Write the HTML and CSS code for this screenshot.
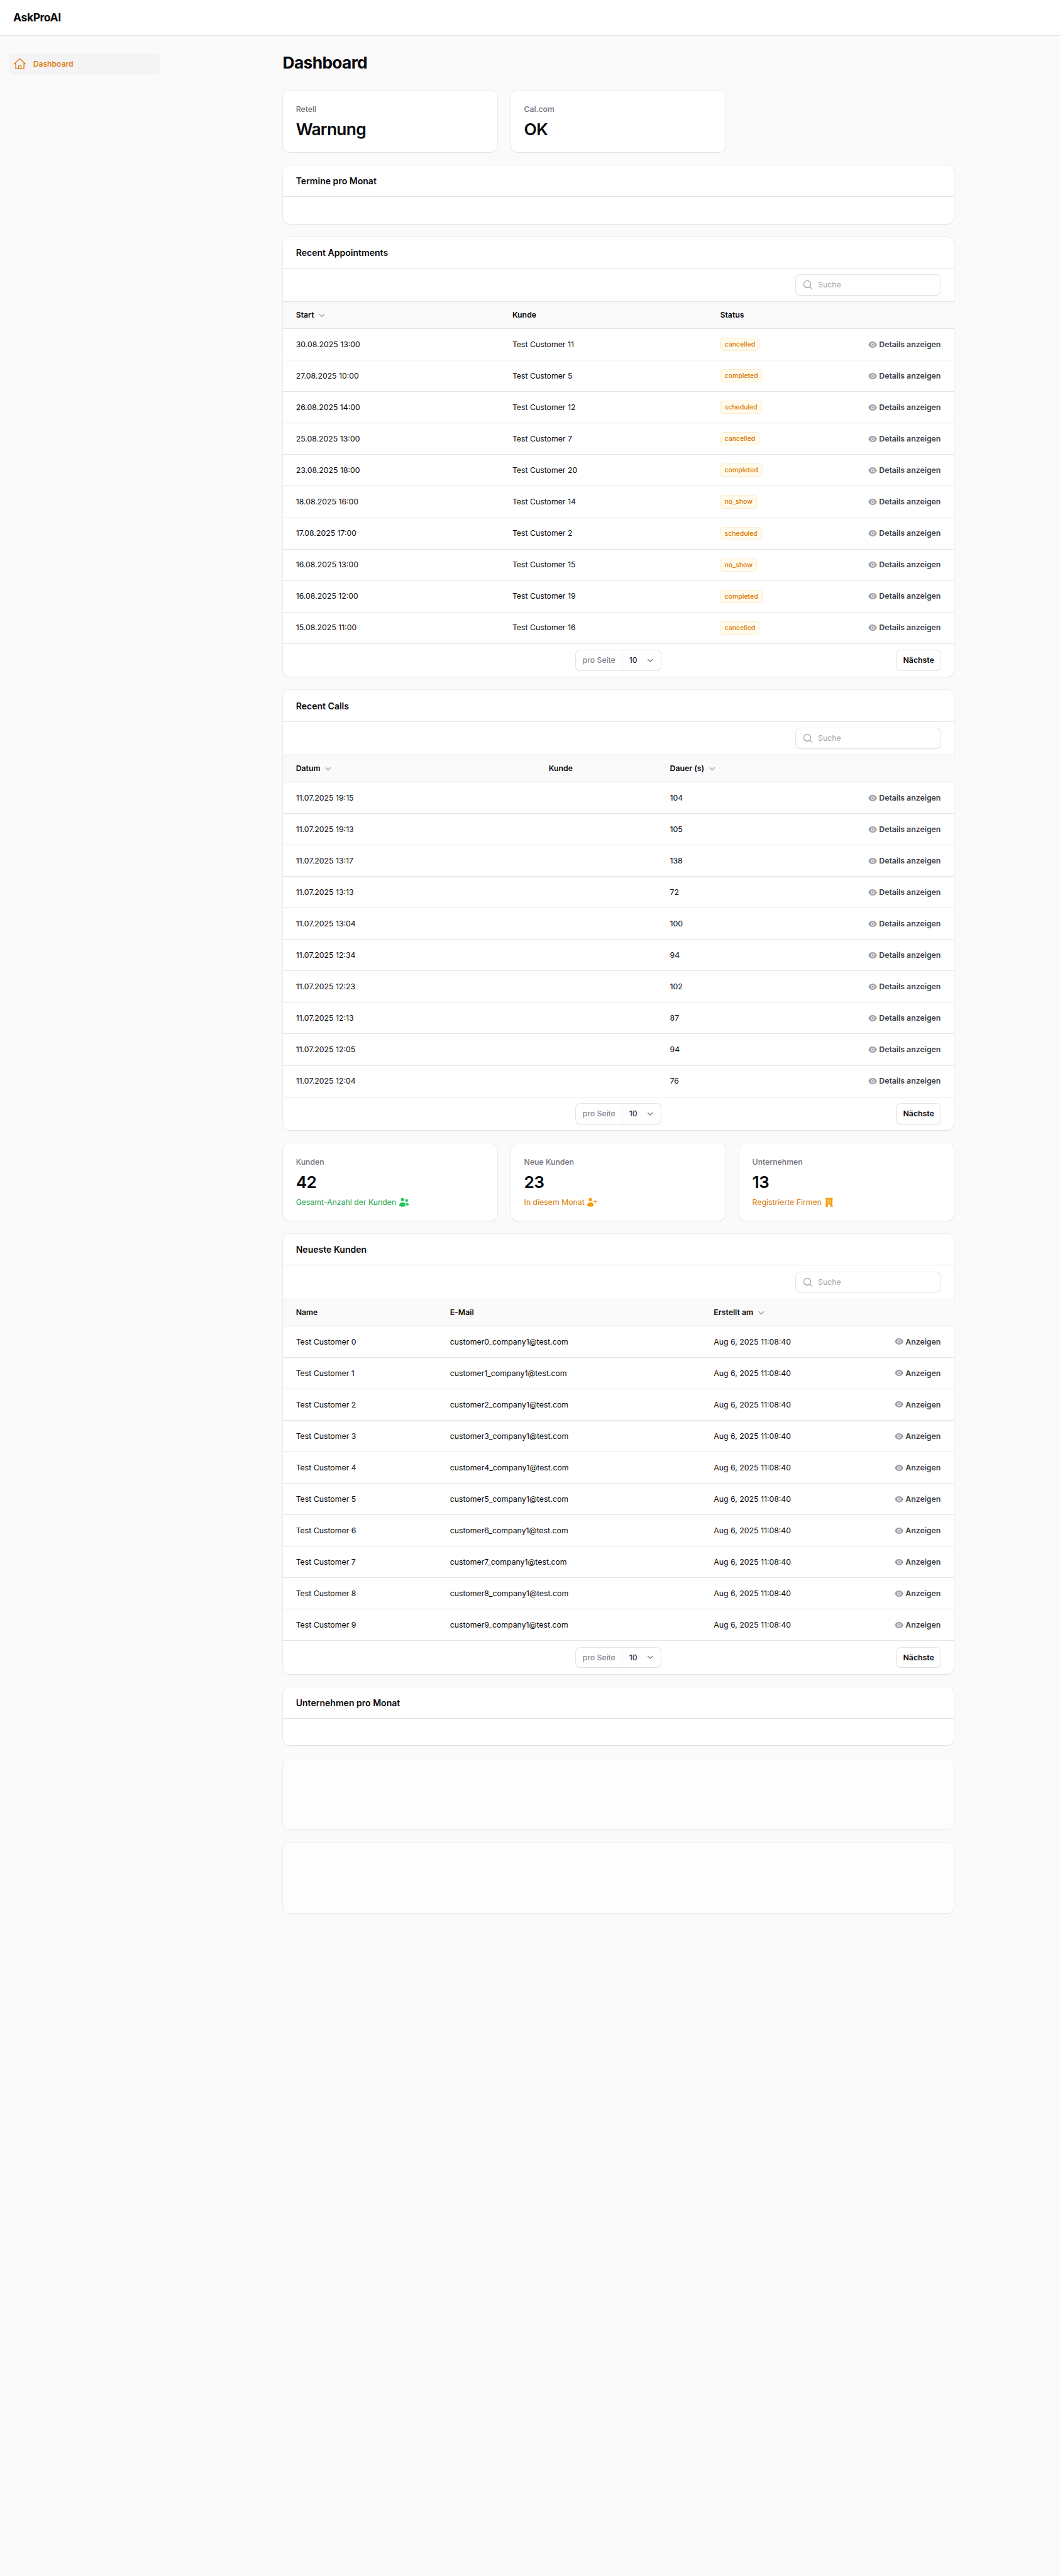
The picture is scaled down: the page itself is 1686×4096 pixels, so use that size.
FILE: index.html
```html
<!DOCTYPE html>
<html lang="de">
<head>
<meta charset="utf-8">
<title>Dashboard - AskProAI</title>
<link rel="stylesheet" href="styles.css">
</head>
<body>
<svg class="sprite" aria-hidden="true">
  <symbol id="home" viewBox="0 0 24 24"><path fill="none" stroke="currentColor" stroke-width="1.5" stroke-linecap="round" stroke-linejoin="round" d="m2.25 12 8.954-8.955c.44-.439 1.152-.439 1.591 0L21.75 12M4.5 9.75v10.125c0 .621.504 1.125 1.125 1.125H9.75v-4.875c0-.621.504-1.125 1.125-1.125h2.25c.621 0 1.125.504 1.125 1.125V21h4.125c.621 0 1.125-.504 1.125-1.125V9.75M8.25 21h8.25"/></symbol>
  <symbol id="search" viewBox="0 0 20 20"><path fill="currentColor" fill-rule="evenodd" d="M9 3.5a5.5 5.5 0 1 0 0 11 5.5 5.5 0 0 0 0-11ZM2 9a7 7 0 1 1 12.452 4.391l3.328 3.329a.75.75 0 1 1-1.06 1.06l-3.329-3.328A7 7 0 0 1 2 9Z"/></symbol>
  <symbol id="chevron" viewBox="0 0 20 20"><path fill="currentColor" fill-rule="evenodd" d="M5.22 8.22a.75.75 0 0 1 1.06 0L10 11.94l3.72-3.72a.75.75 0 1 1 1.06 1.06l-4.25 4.25a.75.75 0 0 1-1.06 0L5.22 9.28a.75.75 0 0 1 0-1.06Z"/></symbol>
  <symbol id="select" viewBox="0 0 20 20"><path fill="none" stroke="currentColor" stroke-width="1.5" stroke-linecap="round" stroke-linejoin="round" d="m6 8 4 4 4-4"/></symbol>
  <symbol id="eye" viewBox="0 0 20 20"><path fill="currentColor" d="M10 12.5a2.5 2.5 0 1 0 0-5 2.5 2.5 0 0 0 0 5Z"/><path fill="currentColor" fill-rule="evenodd" d="M.664 10.59a1.651 1.651 0 0 1 0-1.186A10.004 10.004 0 0 1 10 3c4.257 0 7.893 2.66 9.336 6.41.147.381.146.804 0 1.186A10.004 10.004 0 0 1 10 17c-4.257 0-7.893-2.66-9.336-6.41ZM14 10a4 4 0 1 1-8 0 4 4 0 0 1 8 0Z"/></symbol>
  <symbol id="users" viewBox="0 0 20 20"><path fill="currentColor" d="M7 8a3 3 0 1 0 0-6 3 3 0 0 0 0 6ZM14.5 9a2.5 2.5 0 1 0 0-5 2.5 2.5 0 0 0 0 5ZM1.615 16.428a1.224 1.224 0 0 1-.569-1.175 6.002 6.002 0 0 1 11.908 0c.058.467-.172.92-.57 1.174A9.953 9.953 0 0 1 7 18a9.953 9.953 0 0 1-5.385-1.572ZM14.5 16h-.106c.07-.297.088-.611.048-.933a7.47 7.47 0 0 0-1.588-3.755 4.502 4.502 0 0 1 5.874 2.636.818.818 0 0 1-.36.98A7.465 7.465 0 0 1 14.5 16Z"/></symbol>
  <symbol id="user-plus" viewBox="0 0 20 20"><path fill="currentColor" d="M10 5a3 3 0 1 1-6 0 3 3 0 0 1 6 0ZM1.615 16.428a1.224 1.224 0 0 1-.569-1.175 6.002 6.002 0 0 1 11.908 0c.058.467-.172.92-.57 1.174A9.953 9.953 0 0 1 7 18a9.953 9.953 0 0 1-5.385-1.572ZM16.25 5.75a.75.75 0 0 0-1.5 0v2h-2a.75.75 0 0 0 0 1.5h2v2a.75.75 0 0 0 1.5 0v-2h2a.75.75 0 0 0 0-1.5h-2v-2Z"/></symbol>
  <symbol id="office" viewBox="0 0 20 20"><path fill="currentColor" fill-rule="evenodd" d="M4 16.5v-13h-.25a.75.75 0 0 1 0-1.5h12.5a.75.75 0 0 1 0 1.5H16v13h.25a.75.75 0 0 1 0 1.5h-3.5a.75.75 0 0 1-.75-.75v-2.5a.75.75 0 0 0-.75-.75h-2.5a.75.75 0 0 0-.75.75v2.5a.75.75 0 0 1-.75.75h-3.5a.75.75 0 0 1 0-1.5H4Zm3-11a.5.5 0 0 1 .5-.5h1a.5.5 0 0 1 .5.5v1a.5.5 0 0 1-.5.5h-1a.5.5 0 0 1-.5-.5v-1ZM7.500 9a.5.5 0 0 0-.5.5v1a.5.5 0 0 0 .5.5h1a.5.5 0 0 0 .5-.5v-1a.5.5 0 0 0-.5-.5h-1ZM11 5.500a.5.5 0 0 1 .5-.5h1a.5.5 0 0 1 .5.5v1a.5.5 0 0 1-.5.5h-1a.5.5 0 0 1-.5-.5v-1Zm.5 3.500a.5.5 0 0 0-.5.5v1a.5.5 0 0 0 .5.5h1a.5.5 0 0 0 .5-.5v-1a.5.5 0 0 0-.5-.5h-1Z"/></symbol>
</svg>
<header class="topbar">AskProAI</header>
<div class="layout">
  <nav class="sidebar"><a class="nav-item"><svg class="icon-lg"><use href="#home"/></svg>Dashboard</a></nav>
  <main class="main">
    <h1 class="title">Dashboard</h1>
    <div class="widgets">
      <div class="stats">
        <div class="card stat"><span class="stat-label">Retell</span><span class="stat-value">Warnung</span></div>
        <div class="card stat"><span class="stat-label">Cal.com</span><span class="stat-value">OK</span></div>
      </div>
      <section class="card"><h2 class="card-head">Termine pro Monat</h2><div class="chart"></div></section>
      <section class="card" data-table="appointments"></section>
      <section class="card" data-table="calls"></section>
      <div class="stats">
        <div class="card stat"><span class="stat-label">Kunden</span><span class="stat-value">42</span><span class="stat-desc success">Gesamt-Anzahl der Kunden<svg class="icon"><use href="#users"/></svg></span></div>
        <div class="card stat"><span class="stat-label">Neue Kunden</span><span class="stat-value">23</span><span class="stat-desc warning">In diesem Monat<svg class="icon"><use href="#user-plus"/></svg></span></div>
        <div class="card stat"><span class="stat-label">Unternehmen</span><span class="stat-value">13</span><span class="stat-desc warning">Registrierte Firmen<svg class="icon"><use href="#office"/></svg></span></div>
      </div>
      <section class="card" data-table="customers"></section>
      <section class="card"><h2 class="card-head">Unternehmen pro Monat</h2><div class="chart"></div></section>
      <div class="card placeholder"></div>
      <div class="card placeholder"></div>
    </div>
  </main>
</div>
<script src="tables.js"></script>
</body>
</html>
```
FILE: styles.css
```css
/* One rem is 14.05px; every size below derives from it. */
html { font-size: 14.05px; }
* { box-sizing: border-box; }
body {
  margin: 0;
  min-height: 4096px;
  background: #fafafa;
  color: #09090b;
  font-family: Inter, "Liberation Sans", sans-serif;
  font-size: .875rem;
  line-height: 1.25rem;
}
.sprite { display: none; }
svg { flex: none; display: block; }
.icon { width: 1.25rem; height: 1.25rem; }
.icon-lg { width: 1.5rem; height: 1.5rem; }
.icon-sm { width: 1rem; height: 1rem; }

.topbar {
  display: flex;
  align-items: center;
  height: 4rem;
  padding: 0 1.5rem;
  background: #fff;
  box-shadow: 0 0 0 1px rgba(9, 9, 11, .05), 0 1px 2px rgba(0, 0, 0, .05);
  font-size: 1.25rem;
  font-weight: 700;
  letter-spacing: -.025em;
}
.layout { display: flex; }
.sidebar { width: 20rem; padding: 2rem 1.95rem 0 1rem; }
.nav-item {
  display: flex;
  align-items: center;
  gap: .75rem;
  height: 2.5rem;
  padding: 0 .5rem;
  border-radius: .5rem;
  background: #f4f4f5;
  color: #d97706;
  font-weight: 500;
}
.main { flex: 1; max-width: 80rem; margin: 0 auto; padding: 2rem; }
.title {
  margin: 0 0 2rem;
  font-size: 1.875rem;
  line-height: 2.25rem;
  font-weight: 700;
  letter-spacing: -.025em;
}
.widgets { display: flex; flex-direction: column; gap: 1.5rem; }
.card {
  border-radius: .75rem;
  background: #fff;
  box-shadow: 0 0 0 1px rgba(9, 9, 11, .05), 0 1px 2px rgba(0, 0, 0, .05);
}
.stats { display: grid; grid-template-columns: repeat(3, 1fr); gap: 1.5rem; }
.stat { display: flex; flex-direction: column; gap: .5rem; padding: 1.5rem; }
.stat-label { color: #71717a; font-weight: 500; }
.stat-value {
  font-size: 1.875rem;
  line-height: 2.25rem;
  font-weight: 600;
  letter-spacing: -.025em;
}
.stat-desc { display: flex; align-items: center; gap: .25rem; }
.success { color: #16a34a; }
.success svg { color: #22c55e; }
.warning { color: #d97706; }
.warning svg { color: #f59e0b; }

.card-head {
  height: 3.5625rem;
  margin: 0;
  padding: 1rem 1.5rem;
  border-bottom: 1px solid #e4e4e7;
  font-size: 1rem;
  line-height: 1.5rem;
  font-weight: 600;
}
.chart { height: 3rem; }
.placeholder { height: 8rem; opacity: .7; }

.toolbar {
  display: flex;
  justify-content: flex-end;
  height: 3.8125rem;
  padding: .75rem 1.5rem;
  border-bottom: 1px solid #e4e4e7;
}
.field {
  display: flex;
  align-items: center;
  height: 2.25rem;
  border-radius: .5rem;
  background: #fff;
  box-shadow: 0 0 0 1px rgba(9, 9, 11, .1), 0 1px 2px rgba(0, 0, 0, .05);
}
.search { width: 16.4rem; padding: 0 .75rem; gap: .5rem; color: #a1a1aa; }
.row { display: grid; align-items: center; height: 3.5625rem; border-bottom: 1px solid #e4e4e7; padding: 0 1.5rem; }
.row-head { height: 3.0625rem; background: #fafafa; font-weight: 600; }
.appointments .row { grid-template-columns: 24.5rem 23.53rem 1fr; }
.calls .row { grid-template-columns: 28.62rem 13.72rem 1fr; }
.customers .row { grid-template-columns: 17.44rem 29.87rem 1fr; }
.cell { display: flex; align-items: center; gap: .25rem; }
.last { display: flex; align-items: center; justify-content: space-between; }
.row-head svg { color: #a1a1aa; }
.badge {
  height: 1.5rem;
  padding: 0 .5rem;
  border-radius: .375rem;
  background: #fffbeb;
  box-shadow: inset 0 0 0 1px rgba(217, 119, 6, .1);
  color: #d97706;
  font-size: .75rem;
  line-height: 1.5rem;
  font-weight: 500;
}
.action { display: flex; align-items: center; gap: .25rem; color: #3f3f46; font-weight: 600; }
.action svg { color: #a1a1aa; }
.customers .action { color: #3f3f46; }
.pagination { display: grid; grid-template-columns: 1fr auto 1fr; align-items: center; height: 3.75rem; padding: 0 1.5rem; }
.per-page { grid-column: 2; }
.per-page-label { padding: 0 .75rem; color: #71717a; }
.per-page-value {
  display: flex;
  align-items: center;
  justify-content: space-between;
  width: 4.375rem;
  height: 100%;
  padding: 0 .5rem 0 .75rem;
  border-left: 1px solid #e4e4e7;
}
.per-page-value svg { width: 1.3125rem; height: 1.3125rem; color: #6b7280; }
.next { justify-self: end; padding: 0 .75rem; font-weight: 600; }
```
FILE: tables.js
```js
const icon = (name, cls) => `<svg class="${cls}"><use href="#${name}"/></svg>`;
const customers = [...Array(10).keys()];
const tables = {
  appointments: {
    title: 'Recent Appointments',
    columns: ['Start', 'Kunde', 'Status'],
    sortable: ['Start'],
    action: 'Details anzeigen',
    badge: true,
    rows: [
      ['30.08.2025 13:00', 'Test Customer 11', 'cancelled'],
      ['27.08.2025 10:00', 'Test Customer 5', 'completed'],
      ['26.08.2025 14:00', 'Test Customer 12', 'scheduled'],
      ['25.08.2025 13:00', 'Test Customer 7', 'cancelled'],
      ['23.08.2025 18:00', 'Test Customer 20', 'completed'],
      ['18.08.2025 16:00', 'Test Customer 14', 'no_show'],
      ['17.08.2025 17:00', 'Test Customer 2', 'scheduled'],
      ['16.08.2025 13:00', 'Test Customer 15', 'no_show'],
      ['16.08.2025 12:00', 'Test Customer 19', 'completed'],
      ['15.08.2025 11:00', 'Test Customer 16', 'cancelled']
    ]
  },
  calls: {
    title: 'Recent Calls',
    columns: ['Datum', 'Kunde', 'Dauer (s)'],
    sortable: ['Datum', 'Dauer (s)'],
    action: 'Details anzeigen',
    rows: [['19:15', 104], ['19:13', 105], ['13:17', 138], ['13:13', 72], ['13:04', 100],
      ['12:34', 94], ['12:23', 102], ['12:13', 87], ['12:05', 94], ['12:04', 76]]
      .map(([time, seconds]) => [`11.07.2025 ${time}`, '', seconds])
  },
  customers: {
    title: 'Neueste Kunden',
    columns: ['Name', 'E-Mail', 'Erstellt am'],
    sortable: ['Erstellt am'],
    action: 'Anzeigen',
    rows: customers.map(n => [`Test Customer ${n}`, `customer${n}_company1@test.com`, 'Aug 6, 2025 11:08:40'])
  }
};

document.querySelectorAll('[data-table]').forEach(card => {
  const name = card.dataset.table;
  const t = tables[name];
  card.classList.add(name);
  const head = t.columns
    .map(c => `<div class="cell">${c}${t.sortable.includes(c) ? icon('chevron', 'icon') : ''}</div>`)
    .join('');
  const rows = t.rows.map(([a, b, c]) => `<div class="row"><div>${a}</div><div>${b}</div>
    <div class="last"><span${t.badge ? ' class="badge"' : ''}>${c}</span>
    <span class="action">${icon('eye', 'icon-sm')}${t.action}</span></div></div>`).join('');
  card.innerHTML = `<h2 class="card-head">${t.title}</h2>
    <div class="toolbar"><div class="field search">${icon('search', 'icon')}Suche</div></div>
    <div class="row row-head">${head}</div>${rows}
    <div class="pagination">
      <div class="field per-page"><span class="per-page-label">pro Seite</span><span class="per-page-value">10${icon('select', '')}</span></div>
      <div class="field next">Nächste</div>
    </div>`;
});
```
